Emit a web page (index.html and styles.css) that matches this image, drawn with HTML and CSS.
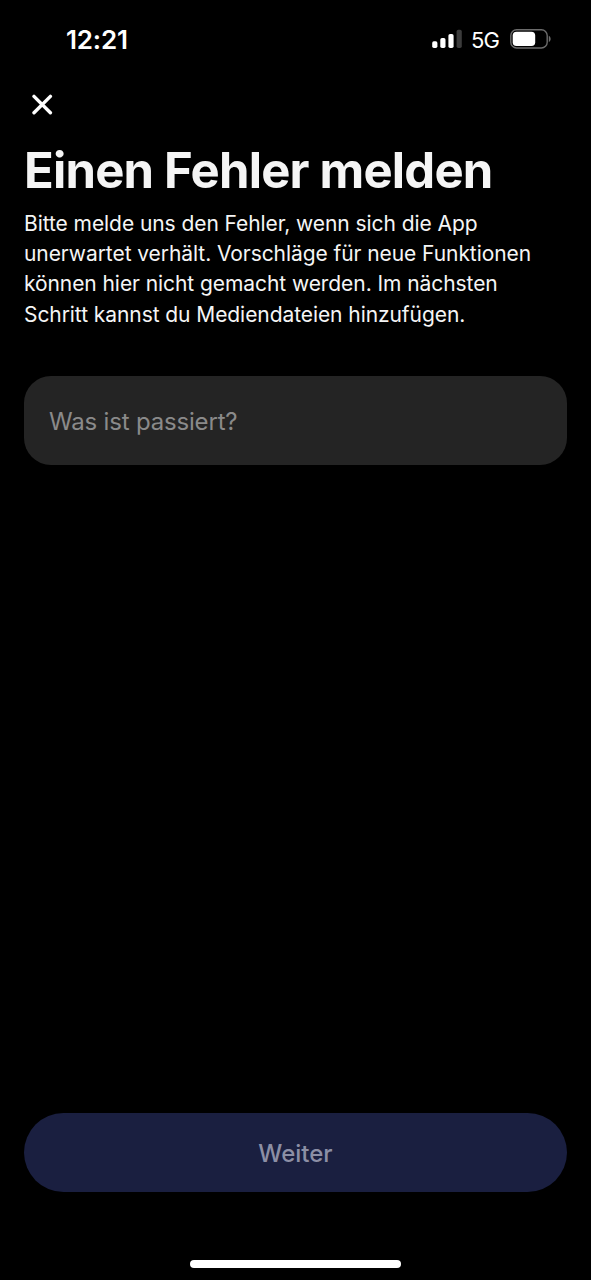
FILE: index.html
```html
<!DOCTYPE html>
<html lang="de">
<head>
<meta charset="utf-8">
<title>Einen Fehler melden</title>
<link rel="stylesheet" href="styles.css">
</head>
<body>
<div class="screen">
  <header class="status">
    <span class="time">12:21</span>
    <div class="indicators">
      <svg class="signal" width="30" height="20" viewBox="0 0 30 20">
        <rect x="0.2" y="12.3" width="5.2" height="6.7" rx="1.7" fill="#fff"/>
        <rect x="8.3" y="9" width="5.2" height="10" rx="1.7" fill="#fff"/>
        <rect x="16.4" y="5" width="5.2" height="14" rx="1.7" fill="#fff"/>
        <rect x="24.6" y="0.8" width="5.2" height="18.2" rx="1.7" fill="#3c3c3c"/>
      </svg>
      <span class="network">5G</span>
      <svg class="battery" width="42" height="20" viewBox="0 0 42 20">
        <rect x="0.8" y="0.8" width="36.4" height="18.2" rx="5.8" fill="none" stroke="#6c6c6c" stroke-width="1.4"/>
        <rect x="2.7" y="2.7" width="22.5" height="14.4" rx="3.8" fill="#fff"/>
        <path d="M38.8 6.8C41.2 8 41.2 12 38.8 13.2Z" fill="#6c6c6c"/>
      </svg>
    </div>
  </header>
  <main class="content">
    <button class="close" aria-label="Schließen">
      <svg width="22" height="22" viewBox="0 0 22 22"><path d="M3 2.4 19.4 18.8M19.4 2.4 3 18.8" stroke="#fff" stroke-width="3.4" stroke-linecap="round"/></svg>
    </button>
    <h1 class="title">Einen Fehler melden</h1>
    <p class="intro">Bitte melde uns den Fehler, wenn sich die App<br>unerwartet verhält. Vorschläge für neue Funktionen<br>können hier nicht gemacht werden. Im nächsten<br>Schritt kannst du Mediendateien hinzufügen.</p>
    <div class="field"><span class="placeholder">Was ist passiert?</span></div>
  </main>
  <footer class="footer">
    <button class="next">Weiter</button>
    <div class="home"></div>
  </footer>
</div>
</body>
</html>
```
FILE: styles.css
```css
* { box-sizing: border-box; }
body { margin: 0; background: #000; color: #fff; font-family: Inter, sans-serif; }
button { border: 0; padding: 0; background: none; font: inherit; color: inherit; }
svg { display: block; }
.screen { width: 591px; height: 1280px; display: flex; flex-direction: column; overflow: hidden; background: #000; }
.status { height: 80px; padding: 0 39px 2px 66px; display: flex; justify-content: space-between; align-items: center; }
.time { font-size: 26px; font-weight: 600; letter-spacing: -0.2px; }
.indicators { display: flex; align-items: center; }
.network { font-size: 22px; line-height: 20px; padding-top: 2px; margin: 0 11px 0 9px; letter-spacing: -0.9px; }
.content { flex: 1; padding: 14px 24px 0; }
.close { display: block; margin-left: 7px; }
.title { margin: 25px 0 0; font-size: 49px; line-height: 60px; font-weight: 700; letter-spacing: -0.8px; white-space: nowrap; color: #f5f5f5; }
.intro { margin: 8px 0 0; font-size: 21px; line-height: 30.2px; font-weight: 400; letter-spacing: -0.07px; white-space: nowrap; color: #f5f5f5; }
.field { margin-top: 46.2px; height: 89px; border-radius: 27px; background: #242424; padding: 2px 25px 0; display: flex; align-items: center; }
.placeholder { font-size: 24px; font-weight: 400; letter-spacing: -0.18px; color: #8a8a8a; }
.footer { height: 167px; padding: 0 24px; display: flex; flex-direction: column; align-items: center; }
.next { width: 100%; height: 79px; padding-top: 1px; border-radius: 40px; background: #1a1f40; color: #8c8fa5; font-size: 24px; font-weight: 500; }
.home { margin-top: 68px; width: 211px; height: 8px; border-radius: 4px; background: #fff; }
```
